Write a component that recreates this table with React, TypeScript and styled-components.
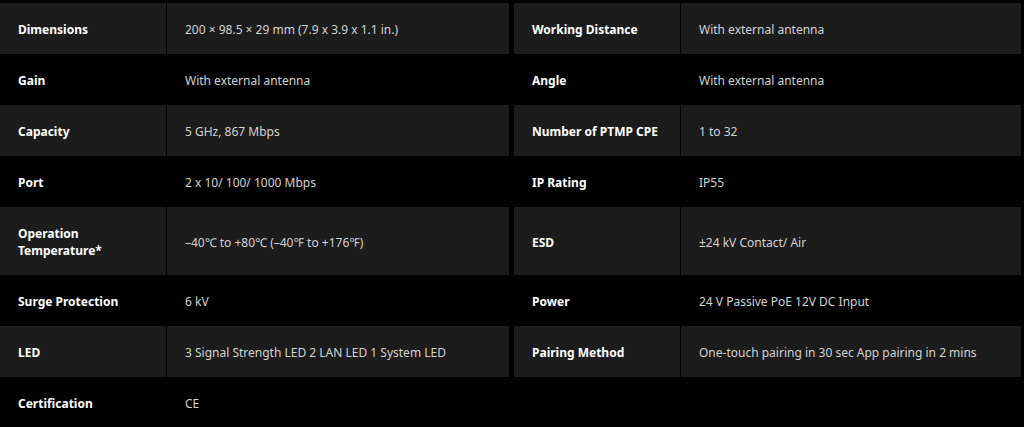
import { createGlobalStyle, styled } from "styled-components";

const GlobalStyle = createGlobalStyle`
  html, body {
    margin: 0;
    padding: 0;
    background: #000;
  }
  body {
    font-family: "Noto Sans", "Open Sans", sans-serif;
  }
`;

const Page = styled.div`
  display: flex;
  flex-direction: column;
  padding: 3px 3px 0 0;
  background: #000;
  width: 1024px;
  box-sizing: border-box;
`;

const Row = styled.div`
  display: flex;
  gap: 5px;
`;

const Pair = styled.div<{ $width: number }>`
  width: ${(p) => p.$width}px;
  flex-shrink: 0;
  display: flex;
  gap: 1px;
`;

const Cell = styled.div<{ $striped: boolean }>`
  display: flex;
  align-items: center;
  box-sizing: border-box;
  padding: 18px 12px 16px 18px;
  font-size: 12px;
  line-height: 17px;
  background: ${(p) => (p.$striped ? "#1c1c1c" : "#000")};
`;

const Label = styled(Cell)`
  width: 166px;
  flex-shrink: 0;
  color: #fff;
  font-weight: 700;
`;

const Value = styled(Cell)`
  flex: 1;
  color: #d2d2d2;
  font-weight: 400;
`;

type Spec = [string, string];

const rows: [Spec, Spec | null][] = [
  [
    ["Dimensions", "200 × 98.5 × 29 mm (7.9 x 3.9 x 1.1 in.)"],
    ["Working Distance", "With external antenna"],
  ],
  [
    ["Gain", "With external antenna"],
    ["Angle", "With external antenna"],
  ],
  [
    ["Capacity", "5 GHz, 867 Mbps"],
    ["Number of PTMP CPE", "1 to 32"],
  ],
  [
    ["Port", "2 x 10/ 100/ 1000 Mbps"],
    ["IP Rating", "IP55"],
  ],
  [
    ["Operation Temperature*", "–40℃ to +80℃ (–40℉ to +176℉)"],
    ["ESD", "±24 kV Contact/ Air"],
  ],
  [
    ["Surge Protection", "6 kV"],
    ["Power", "24 V Passive PoE 12V DC Input"],
  ],
  [
    ["LED", "3 Signal Strength LED 2 LAN LED 1 System LED"],
    ["Pairing Method", "One-touch pairing in 30 sec App pairing in 2 mins"],
  ],
  [["Certification", "CE"], null],
];

type SpecPairProps = { spec: Spec | null; striped: boolean; width: number };

const SpecPair = ({ spec, striped, width }: SpecPairProps) => (
  <Pair $width={width}>
    {spec && (
      <>
        <Label $striped={striped}>{spec[0]}</Label>
        <Value $striped={striped}>{spec[1]}</Value>
      </>
    )}
  </Pair>
);

const App = () => (
  <>
    <GlobalStyle />
    <Page>
      {rows.map(([left, right], i) => (
        <Row key={i}>
          <SpecPair spec={left} striped={i % 2 === 0} width={509} />
          <SpecPair spec={right} striped={i % 2 === 0} width={507} />
        </Row>
      ))}
    </Page>
  </>
);

export default App;
